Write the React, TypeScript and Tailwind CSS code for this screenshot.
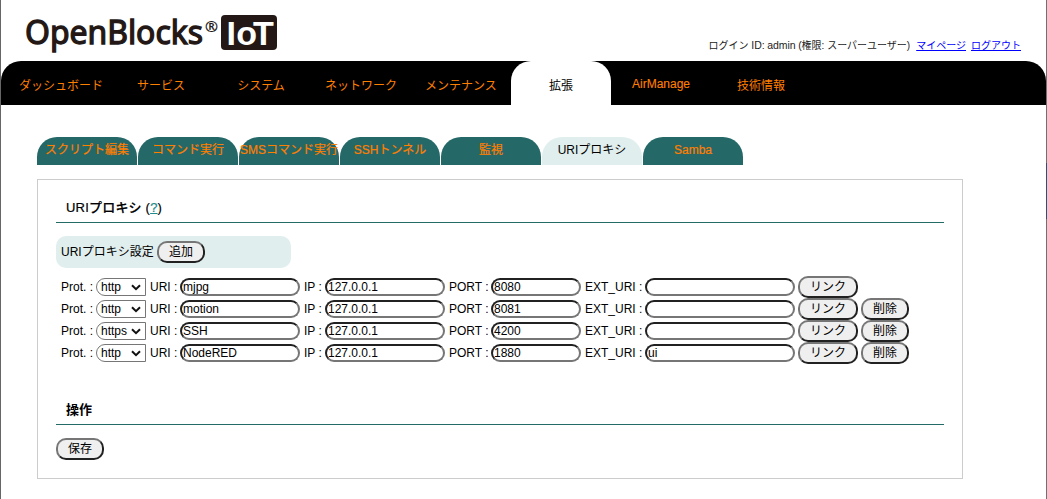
import React from "react";

const NAV = ["ダッシュボード", "サービス", "システム", "ネットワーク", "メンテナンス", "拡張", "AirManage", "技術情報"];
const TABS = ["スクリプト編集", "コマンド実行", "SMSコマンド実行", "SSHトンネル", "監視", "URIプロキシ", "Samba"];
const ROWS = [
  { prot: "http", uri: "mjpg", ip: "127.0.0.1", port: "8080", ext: "", removable: false },
  { prot: "http", uri: "motion", ip: "127.0.0.1", port: "8081", ext: "", removable: true },
  { prot: "https", uri: "SSH", ip: "127.0.0.1", port: "4200", ext: "", removable: true },
  { prot: "http", uri: "NodeRED", ip: "127.0.0.1", port: "1880", ext: "ui", removable: true },
];

function Logo() {
  return (
    <svg width="256" height="61" viewBox="0 0 256 61" className="block" fontFamily="'Noto Sans', 'Open Sans', sans-serif">
      <text x="1" y="44" fontSize="32" fill="#231815" stroke="#231815" strokeWidth="1.3" textLength="178" lengthAdjust="spacingAndGlyphs">OpenBlocks</text>
      <text x="181" y="32" fontSize="15" fill="#231815" stroke="#231815" strokeWidth="0.2" textLength="13" lengthAdjust="spacingAndGlyphs">®</text>
      <rect x="197" y="15" width="56" height="35" rx="4" fill="#231815" />
      <text x="202.5 212.3 229" y="45" fontSize="34" fontWeight="700" fontFamily="'Liberation Sans', sans-serif" fill="#fff">IoT</text>
    </svg>
  );
}

function Button({ children, wide }: { children: React.ReactNode; wide?: boolean }) {
  return (
    <button
      className={`h-[22px] shrink-0 rounded-[10px] border-2 border-[#767676] bg-[#efefef] text-center leading-[18px] text-black [border-style:outset] ${wide ? "w-[60px]" : "w-12"}`}
    >
      {children}
    </button>
  );
}

function Field({ value, className }: { value: string; className: string }) {
  return (
    <input
      defaultValue={value}
      className={`h-[18px] shrink-0 rounded-[10px] border-2 border-[#767676] bg-white px-px py-0 leading-[14px] text-black [border-style:inset] ${className}`}
    />
  );
}

function Protocol({ value }: { value: string }) {
  return (
    <span className="relative mr-1 h-[18px] w-[50px] shrink-0">
      <select
        defaultValue={value}
        className="block h-[18px] w-[50px] appearance-none rounded-l-[9px] border border-[#767676] bg-white py-0 pl-1 leading-[16px] text-black"
      >
        <option>http</option>
        <option>https</option>
      </select>
      <svg className="pointer-events-none absolute top-[6px] right-[5px]" width="10" height="7" viewBox="0 0 10 7">
        <path d="M1 1.2 5 5.2 9 1.2" fill="none" stroke="#111" strokeWidth="2" />
      </svg>
    </span>
  );
}

function Heading({ children }: { children: React.ReactNode }) {
  return <h2 className="h-[31px] border-b border-[#256b65] pl-[10px] text-[13px] leading-[31px]">{children}</h2>;
}

export default function App() {
  return (
    <div className="flex h-[499px] w-[1047px] overflow-hidden bg-white font-['Liberation_Sans','Noto_Sans_CJK_JP',sans-serif] text-xs text-black">
      <div className="w-px shrink-0 bg-[#666]" />
      <div className="w-[1045px] shrink-0">
        <header className="flex h-[61px] justify-between pr-[25px] pl-[23px]">
          <Logo />
          <div className="flex pt-[38px] text-[10px] leading-[15px] whitespace-nowrap">
            <span className="text-[#222]">
              ログイン <span className="text-[10.5px] tracking-[-0.1px]">ID: admin (</span>権限: スーパーユーザー)
            </span>
            <a href="#" className="ml-[6px] text-[#00f] underline">マイページ</a>
            <a href="#" className="ml-[5px] text-[#00f] underline">ログアウト</a>
          </div>
        </header>

        <nav className="flex h-11 rounded-t-[20px] bg-black pl-[10px]">
          {NAV.map((label) => (
            <a
              key={label}
              href="#"
              className={`w-[100px] text-center whitespace-nowrap ${
                label === "拡張"
                  ? "h-11 rounded-t-[20px] bg-white leading-[50px] text-black"
                  : label === "AirManage"
                    ? "leading-[46px] text-[#ff7f00] [-webkit-text-stroke:0.1px_#ff7f00]"
                    : "leading-[50px] text-[#ff7f00]"
              }`}
            >
              {label}
            </a>
          ))}
        </nav>

        <div className="mt-8 ml-9 flex gap-px">
          {TABS.map((label) => (
            <a
              key={label}
              href="#"
              className={`flex h-7 w-[100px] justify-center rounded-t-[20px] leading-[26px] whitespace-nowrap ${
                label === "URIプロキシ"
                  ? "bg-[#e0eeed] text-black"
                  : "bg-[#256868] text-[#ff7f00] [-webkit-text-stroke:0.2px_#ff7f00]"
              }`}
            >
              {label}
            </a>
          ))}
        </div>

        <main className="mt-[14px] ml-9 h-[300px] w-[926px] border border-[#ccc] px-[18px] pt-3">
          <Heading>
            <span className="font-medium tracking-[0.2px] [-webkit-text-stroke:0.2px]">
              URIプロキシ (<a href="#" className="text-[#218b8b] underline">?</a>)
            </span>
          </Heading>

          <div className="mt-[13px] flex h-8 w-[235px] items-center rounded-[10px] bg-[#e0eeed] pl-[5px] leading-[18px]">
            <span className="w-24 shrink-0 whitespace-nowrap">URIプロキシ設定</span>
            <Button>追加</Button>
          </div>

          <div className="mt-2 pl-[5px]">
            {ROWS.map((row) => (
              <div key={row.uri} className="flex h-[22px] items-center whitespace-nowrap">
                <span className="w-[35px] shrink-0">Prot. :</span>
                <Protocol value={row.prot} />
                <span className="w-[30px] shrink-0">URI :</span>
                <Field value={row.uri} className="w-[120px]" />
                <span className="ml-1 w-[21px] shrink-0">IP :</span>
                <Field value={row.ip} className="w-[120px]" />
                <span className="ml-1 w-[42px] shrink-0">PORT :</span>
                <Field value={row.port} className="w-[90px]" />
                <span className="ml-1 w-[60px] shrink-0">EXT_URI :</span>
                <Field value={row.ext} className="mr-[3px] w-[150px]" />
                <div className="flex gap-[3px]">
                  <Button wide>リンク</Button>
                  {row.removable && <Button>削除</Button>}
                </div>
              </div>
            ))}
          </div>

          <div className="mt-[30px]">
            <Heading>
              <span className="font-bold">操作</span>
            </Heading>
          </div>
          <div className="mt-[13px]">
            <Button>保存</Button>
          </div>
        </main>
      </div>
      <div className="flex w-px shrink-0 flex-col bg-[#707070] pt-[163px]">
        <div className="h-14 bg-[#28527a]" />
      </div>
    </div>
  );
}
